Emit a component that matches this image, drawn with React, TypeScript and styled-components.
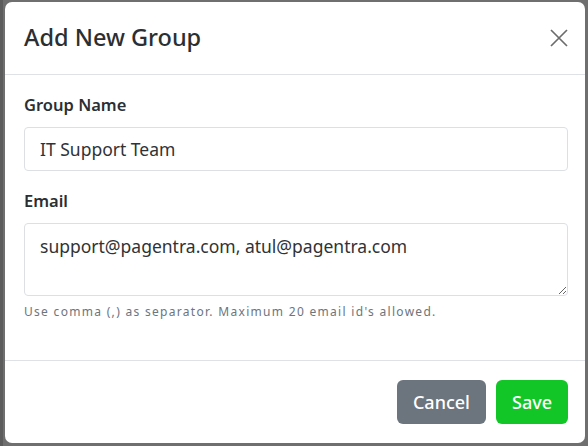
import React from 'react';
import styled, { createGlobalStyle } from 'styled-components';

const GlobalStyle = createGlobalStyle`
  html, body {
    margin: 0;
    padding: 0;
    background: #6f6f6f;
    font-family: "Noto Sans", "Open Sans", sans-serif;
  }
  * { box-sizing: border-box; }
`;

const Backdrop = styled.div`
  width: 588px;
  height: 446px;
  padding: 2px 3px 3px 5px;
  background: linear-gradient(to right, #5c5c5c 0, #5c5c5c 3px, #6f6f6f 3px);
`;

const Modal = styled.div`
  display: flex;
  flex-direction: column;
  height: 100%;
  background: #fff;
  border-radius: 7px;
  overflow: hidden;
`;

const Header = styled.div`
  display: flex;
  align-items: center;
  justify-content: space-between;
  height: 73px;
  padding: 0 17px 1px 19px;
  border-bottom: 1px solid #dee2e6;
`;

const Title = styled.h5`
  margin: 0;
  font-size: 23.5px;
  font-weight: 500;
  line-height: 1.2;
  color: #2b2f33;
`;

const CloseButton = styled.button`
  display: flex;
  align-items: center;
  justify-content: center;
  width: 18px;
  height: 18px;
  padding: 0;
  border: none;
  background: transparent;
  color: #6c6c6c;
  cursor: pointer;
`;

const Body = styled.div`
  flex: 1;
  display: flex;
  flex-direction: column;
  padding: 19px 17px 0 19px;
  border-bottom: 1px solid #dee2e6;
`;

const Field = styled.div`
  display: flex;
  flex-direction: column;
  margin-bottom: 19px;
`;

const Label = styled.label`
  font-size: 16.5px;
  font-weight: 600;
  line-height: 22px;
  color: #2b2f33;
  margin-bottom: 11px;
`;

const Input = styled.input`
  height: 44px;
  padding: 0 15px;
  border: 1px solid #dcdfe3;
  border-radius: 4px;
  font-family: inherit;
  font-size: 17.5px;
  color: #2f3337;
  outline: none;
`;

const TextArea = styled.textarea`
  height: 73px;
  padding: 9px 15px;
  border: 1px solid #dcdfe3;
  border-radius: 4px;
  font-family: inherit;
  font-size: 17.5px;
  line-height: 26px;
  color: #2f3337;
  resize: vertical;
  outline: none;
`;

const Help = styled.small`
  margin-top: 8px;
  font-size: 12px;
  line-height: 16px;
  letter-spacing: 1.3px;
  color: #6c757d;
`;

const Footer = styled.div`
  display: flex;
  justify-content: flex-end;
  align-items: center;
  gap: 10px;
  height: 82px;
  padding: 0 17px 0 0;
`;

const Button = styled.button<{ $variant: 'secondary' | 'success' }>`
  height: 44px;
  padding: 0 16px;
  border: none;
  border-radius: 6px;
  font-family: inherit;
  font-size: 18px;
  font-weight: 500;
  color: #fff;
  background: ${({ $variant }) => ($variant === 'success' ? '#13c628' : '#6c747d')};
  cursor: pointer;
`;

export default function App() {
  return (
    <>
      <GlobalStyle />
      <Backdrop>
        <Modal>
          <Header>
            <Title>Add New Group</Title>
            <CloseButton aria-label="Close">
              <svg width="18" height="18" viewBox="0 0 18 18" fill="none" stroke="currentColor" strokeWidth="1.7">
                <path d="M1 1 L17 17 M17 1 L1 17" />
              </svg>
            </CloseButton>
          </Header>
          <Body>
            <Field>
              <Label>Group Name</Label>
              <Input defaultValue="IT Support Team" />
            </Field>
            <Field>
              <Label>Email</Label>
              <TextArea defaultValue="support@pagentra.com, atul@pagentra.com" />
              <Help>Use comma (,) as separator. Maximum 20 email id's allowed.</Help>
            </Field>
          </Body>
          <Footer>
            <Button $variant="secondary">Cancel</Button>
            <Button $variant="success">Save</Button>
          </Footer>
        </Modal>
      </Backdrop>
    </>
  );
}
